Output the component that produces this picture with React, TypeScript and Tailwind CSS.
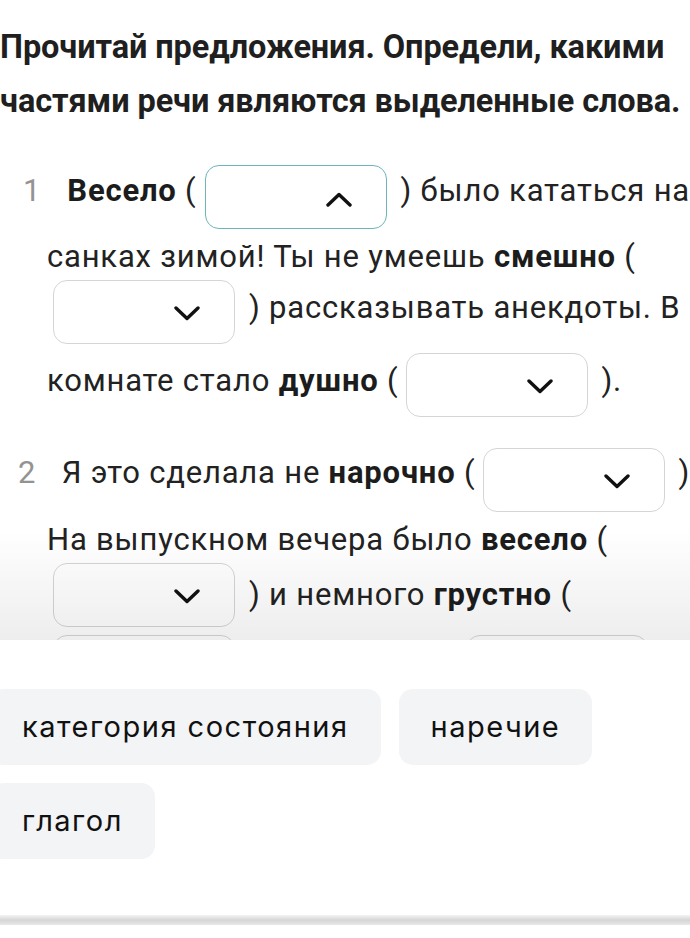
import React from 'react';

const Chevron = ({ up = false }: { up?: boolean }) => (
  <svg width="28" height="16" viewBox="0 0 28 16" fill="none" className="block">
    <polyline
      points={up ? '3,14 14,3.5 25,14' : '3,2 14,12.5 25,2'}
      stroke="#111"
      strokeWidth="3.4"
      strokeLinecap="round"
      strokeLinejoin="round"
    />
  </svg>
);

const Select = ({ active = false, className = '' }: { active?: boolean; className?: string }) => (
  <div
    className={`flex h-[64px] w-[182px] shrink-0 items-center justify-end rounded-[14px] border bg-white pr-[33px] pt-[4px] ${
      active ? 'border-[#6cb6bb]' : 'border-[#d5d5d5]'
    } ${className}`}
  >
    <Chevron up={active} />
  </div>
);

const B = ({ children }: { children: React.ReactNode }) => (
  <b className="font-bold text-[#1c1c1c]">{children}</b>
);

const App = () => {
  return (
    <div className="flex h-[938px] w-[690px] flex-col overflow-hidden bg-white font-['Roboto',sans-serif] text-[#222]">
      <div className="relative h-[640px] shrink-0 overflow-hidden">
        <h1 className="whitespace-nowrap pt-[20px] text-[32.5px] font-bold leading-[54px] tracking-[-0.1px] text-[#1f1f1f]">
          Прочитай предложения. Определи, какими
          <br />
          частями речи являются выделенные слова.
        </h1>

        <div className="mt-[37px] whitespace-nowrap text-[31px] tracking-[0.8px]">
          <div className="flex h-[64px] items-center">
            <span className="mb-[12px] ml-[23px] w-[47px] text-[#939393]">1</span>
            <span className="mb-[12px]">
              <B>Весело</B> (
            </span>
            <Select active className="ml-[8px] mr-[14px]" />
            <span className="mb-[12px]">) было кататься на</span>
          </div>
          <div className="flex h-[51px] items-center pl-[47px] pt-[5px]">
            санках зимой! Ты не умеешь&nbsp;<B>смешно</B>&nbsp;(
          </div>
          <div className="flex h-[64px] items-center pl-[47px]">
            <Select className="ml-[6px] mr-[14px]" />
            <span className="mb-[8px]">) рассказывать анекдоты. В</span>
          </div>
          <div className="mt-[9px] flex h-[64px] items-center pl-[47px]">
            <span className="mb-[8px]">
              комнате стало <B>душно</B> (
            </span>
            <Select className="ml-[8px] mr-[13px]" />
            <span className="mb-[8px]">).</span>
          </div>

          <div className="mt-[31px] flex h-[64px] items-center">
            <span className="mb-[14px] ml-[18px] w-[44px] text-[#939393]">2</span>
            <span className="mb-[14px]">
              Я это сделала не <B>нарочно</B> (
            </span>
            <Select className="ml-[8px] mr-[13px]" />
            <span className="mb-[14px]">)</span>
          </div>
          <div className="flex h-[51px] items-center pl-[47px] pt-[5px]">
            На выпускном вечера было&nbsp;<B>весело</B>&nbsp;(
          </div>
          <div className="flex h-[64px] items-center pl-[47px]">
            <Select className="ml-[6px] mr-[14px]" />
            <span>
              ) и немного <B>грустно</B> (
            </span>
          </div>
          <div className="mt-[8px] flex h-[64px] items-center gap-[231px] pl-[47px]">
            <Select className="ml-[6px]" />
            <Select />
          </div>
        </div>

        <div className="pointer-events-none absolute inset-x-0 bottom-0 h-[110px] bg-linear-to-b from-black/0 to-black/[0.07]" />
      </div>

      <div className="flex flex-1 flex-col bg-white">
        <div className="-ml-[10px] flex flex-wrap gap-[18px] pt-[49px] font-['Inter',sans-serif] text-[29px] tracking-[1.5px] text-[#111]">
          <div className="flex h-[76px] items-center rounded-[14px] bg-[#f3f4f6] px-[32px]">категория состояния</div>
          <div className="flex h-[76px] items-center rounded-[14px] bg-[#f3f4f6] px-[32px]">наречие</div>
          <div className="flex h-[76px] items-center rounded-[14px] bg-[#f3f4f6] px-[32px]">глагол</div>
        </div>
        <div className="mb-[13px] mt-auto h-[10px] bg-linear-to-b from-[#f4f4f4] via-[#d6d6d6] to-[#e8e8e8]" />
      </div>
    </div>
  );
};

export default App;
